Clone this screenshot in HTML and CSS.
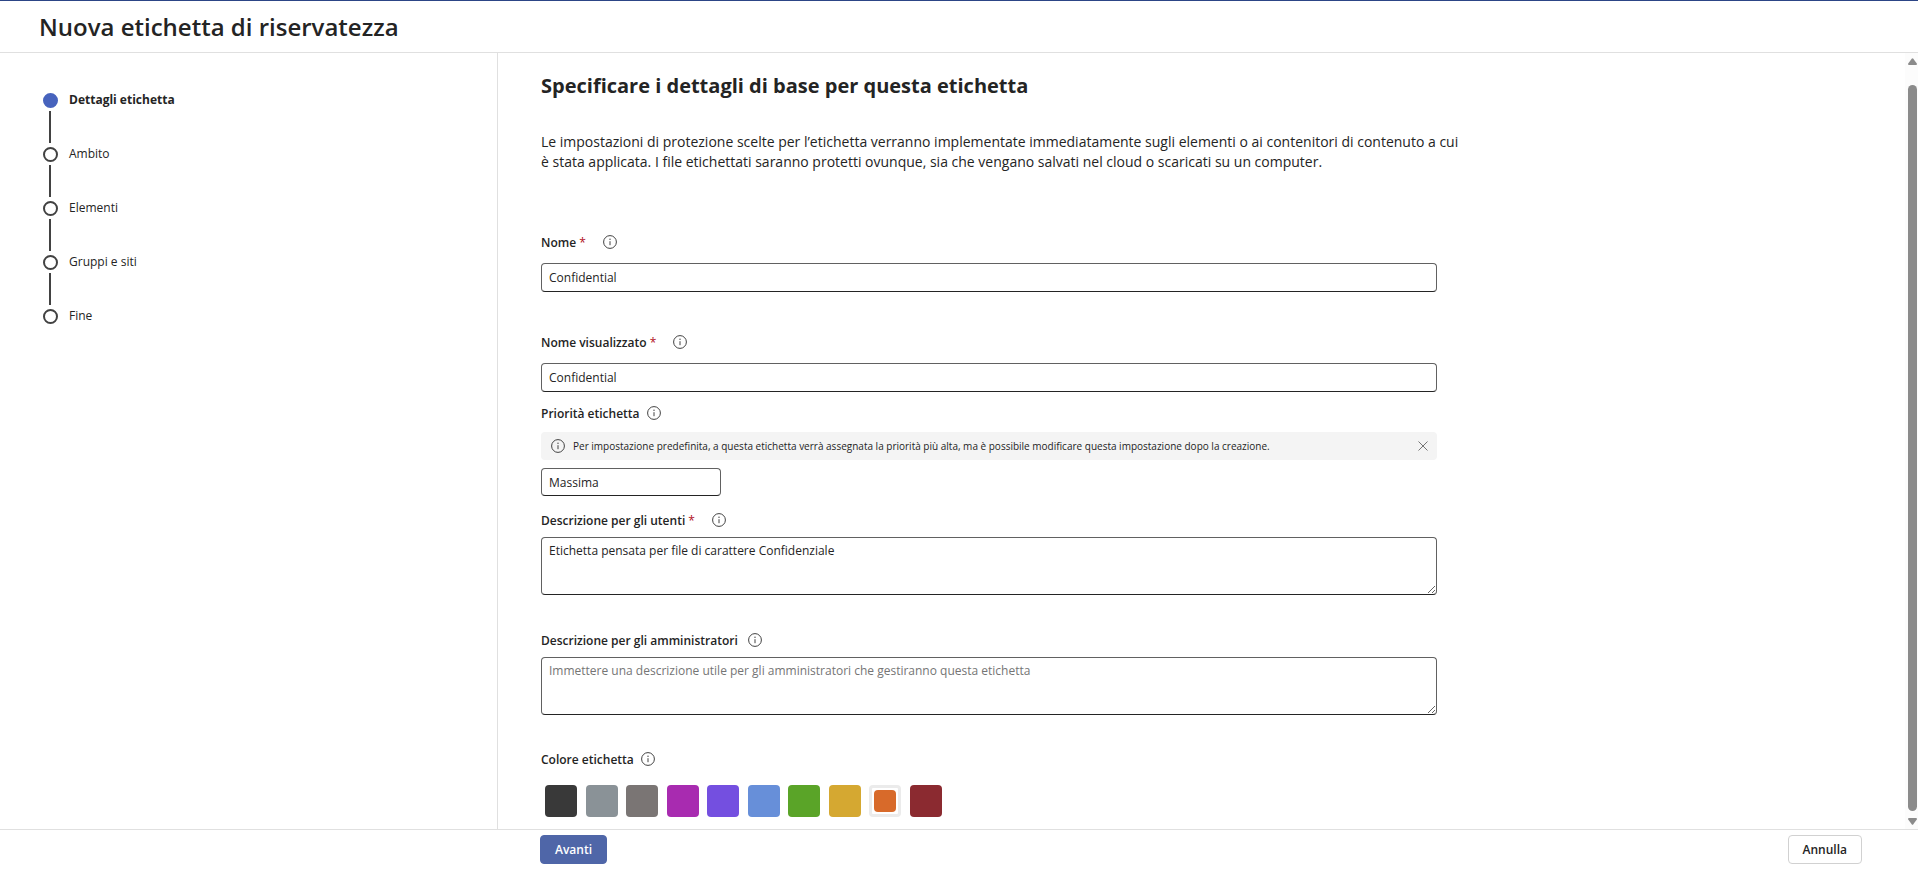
FILE: index.html
```html
<!DOCTYPE html>
<html lang="it">
<head>
<meta charset="utf-8">
<meta name="viewport" content="width=device-width, initial-scale=1">
<title>Nuova etichetta di riservatezza</title>
<link rel="stylesheet" href="styles.css">
</head>
<body>
<svg class="defs" aria-hidden="true">
  <symbol id="info" viewBox="0 0 16 16">
    <circle cx="8" cy="8" r="6.4" fill="none" stroke="currentColor" stroke-width="1"/>
    <path d="M8 7.2v4" stroke="currentColor" stroke-width="1" fill="none"/>
    <circle cx="8" cy="5.3" r=".7" fill="currentColor"/>
  </symbol>
</svg>
<div class="app">
  <header class="header"><h1 class="header-title">Nuova etichetta di riservatezza</h1></header>
  <div class="body">
    <nav class="sidebar" aria-label="Passaggi">
      <ol class="steps">
        <li class="step step-current" aria-current="step"><span class="dot"></span>Dettagli etichetta</li>
        <li class="step"><span class="dot"></span>Ambito</li>
        <li class="step"><span class="dot"></span>Elementi</li>
        <li class="step"><span class="dot"></span>Gruppi e siti</li>
        <li class="step"><span class="dot"></span>Fine</li>
      </ol>
    </nav>
    <main class="content">
      <form class="form" id="details">
        <h2 class="title">Specificare i dettagli di base per questa etichetta</h2>
        <p class="intro">Le impostazioni di protezione scelte per l’etichetta verranno implementate immediatamente sugli elementi o ai contenitori di contenuto a cui è stata applicata. I file etichettati saranno protetti ovunque, sia che vengano salvati nel cloud o scaricati su un computer.</p>

        <div class="field field-name">
          <div class="label-row required"><label for="name">Nome <span class="star">*</span></label><svg class="icon" aria-hidden="true"><use href="#info"/></svg></div>
          <input class="control" id="name" type="text" value="Confidential">
        </div>
        <div class="field field-display">
          <div class="label-row required"><label for="display">Nome visualizzato <span class="star">*</span></label><svg class="icon" aria-hidden="true"><use href="#info"/></svg></div>
          <input class="control" id="display" type="text" value="Confidential">
        </div>
        <div class="field field-priority">
          <div class="label-row"><label for="priority">Priorità etichetta</label><svg class="icon" aria-hidden="true"><use href="#info"/></svg></div>
          <div class="notice">
            <svg class="icon" aria-hidden="true"><use href="#info"/></svg>
            <span class="notice-text">Per impostazione predefinita, a questa etichetta verrà assegnata la priorità più alta, ma è possibile modificare questa impostazione dopo la creazione.</span>
            <button class="close" type="button" aria-label="Chiudi"><svg class="close-icon" viewBox="0 0 10 10" aria-hidden="true"><path d="M.5.5l9 9M9.500.5l-9 9" fill="none" stroke="currentColor"/></svg></button>
          </div>
          <input class="control control-short" id="priority" type="text" value="Massima">
        </div>
        <div class="field field-users">
          <div class="label-row required"><label for="users">Descrizione per gli utenti <span class="star">*</span></label><svg class="icon" aria-hidden="true"><use href="#info"/></svg></div>
          <textarea class="control area" id="users">Etichetta pensata per file di carattere Confidenziale</textarea>
        </div>
        <div class="field field-admins">
          <div class="label-row spaced"><label for="admins">Descrizione per gli amministratori</label><svg class="icon" aria-hidden="true"><use href="#info"/></svg></div>
          <textarea class="control area" id="admins" placeholder="Immettere una descrizione utile per gli amministratori che gestiranno questa etichetta"></textarea>
        </div>
        <div class="field field-color">
          <div class="label-row"><span id="color-label">Colore etichetta</span><svg class="icon" aria-hidden="true"><use href="#info"/></svg></div>
          <div class="swatches" role="radiogroup" aria-labelledby="color-label">
            <input class="swatch charcoal" type="radio" name="color" aria-label="Antracite">
            <input class="swatch silver" type="radio" name="color" aria-label="Argento">
            <input class="swatch gray" type="radio" name="color" aria-label="Grigio">
            <input class="swatch magenta" type="radio" name="color" aria-label="Magenta">
            <input class="swatch violet" type="radio" name="color" aria-label="Viola">
            <input class="swatch blue" type="radio" name="color" aria-label="Blu">
            <input class="swatch green" type="radio" name="color" aria-label="Verde">
            <input class="swatch yellow" type="radio" name="color" aria-label="Giallo">
            <input class="swatch orange" type="radio" name="color" aria-label="Arancione" checked>
            <input class="swatch red" type="radio" name="color" aria-label="Rosso">
          </div>
        </div>
      </form>
    </main>
    <div class="scrollbar" aria-hidden="true">
      <svg class="arrow" viewBox="0 0 9 7"><path d="M3.700.7q.8-1.100 1.600 0l3.500 4.900q.5 1.400-.8 1.400H1Q-.3 7 .2 5.600z" fill="#8b8b8b"/></svg>
      <div class="thumb"></div>
      <svg class="arrow" viewBox="0 0 9 7"><path d="M3.700 6.300q.8 1.100 1.600 0l3.500-4.900Q9.300 0 8 0H1Q-.3 0 .2 1.400z" fill="#8b8b8b"/></svg>
    </div>
  </div>
  <footer class="footer">
    <button class="button primary" type="submit" form="details">Avanti</button>
    <button class="button" type="button">Annulla</button>
  </footer>
</div>
</body>
</html>
```
FILE: styles.css
```css
* { box-sizing: border-box; }

body {
  margin: 0;
  background: #fff;
  color: #242424;
  font: 12px/20px "Open Sans", "Noto Sans", sans-serif;
}

.defs { display: none; }

.app {
  display: flex;
  flex-direction: column;
  min-height: 100vh;
  border-top: 1px solid #2c4586;
}

.header {
  display: flex;
  align-items: center;
  padding: 10px 39px 9px;
  border-bottom: 1px solid #e0e0e0;
}

.header-title {
  margin: 0;
  font-size: 24px;
  line-height: 32px;
  font-weight: 600;
}

.body { display: flex; flex: 1; }

.sidebar {
  flex: 0 0 498px;
  padding: 37px 43px;
  border-right: 1px solid #e0e0e0;
}

.steps {
  display: flex;
  flex-direction: column;
  gap: 34px;
  margin: 0;
  padding: 0;
  list-style: none;
}

.step {
  position: relative;
  display: flex;
  align-items: center;
  gap: 11px;
}

.step:not(:last-child)::after {
  content: "";
  position: absolute;
  left: 6px;
  top: 21px;
  width: 2px;
  height: 32px;
  background: #424242;
}

.dot {
  width: 15px;
  height: 15px;
  border: 2px solid #424242;
  border-radius: 50%;
}

.step-current { font-weight: 700; }
.step-current .dot { border-color: #4763bd; background: #4763bd; }

.content { flex: 1; padding: 19px 43px 12px; }
.form { max-width: 896px; }

.title {
  margin: 0;
  font-size: 20px;
  line-height: 28px;
  font-weight: 700;
}

.intro { margin: 32px -32px 59px 0; font-size: 14px; }

.label-row {
  display: flex;
  align-items: center;
  gap: 6px;
  height: 24px;
  font-weight: 600;
}

.required { gap: 16px; }
.spaced { gap: 9px; }
.star { color: #b10e1c; font-weight: 400; }

.icon { flex: none; width: 16px; height: 16px; color: #424242; }
.label-row .icon { margin-bottom: 2px; }

.control {
  display: block;
  width: 100%;
  height: 29px;
  margin: 0;
  padding: 0 7px;
  border: 1px solid #616161;
  border-bottom-color: #242424;
  border-radius: 4px;
  background: #fff;
  color: #242424;
  font: inherit;
}

.control::placeholder { color: #757575; opacity: 1; }
.control-short { width: 180px; height: 28px; }
.area { height: 58px; padding: 3px 7px; resize: vertical; }

.field { display: flex; flex-direction: column; gap: 8px; }
.field-display { margin-top: 39px; }
.field-priority { margin-top: 10px; }
.field-priority .label-row { margin-bottom: -2px; }
.field-users { gap: 4px; margin-top: 13px; }
.field-admins { gap: 4px; margin-top: 34px; }
.field-color { gap: 13px; margin-top: 33px; }

.notice {
  display: flex;
  align-items: center;
  gap: 7px;
  height: 28px;
  padding: 0 8px 0 9px;
  border-radius: 4px;
  background: #f4f4f4;
  font-size: 10px;
}

.notice-text { flex: 1; }

.close {
  display: flex;
  padding: 1px;
  border: 0;
  background: none;
  color: #757575;
}

.close-icon { width: 10px; height: 10px; }

.swatches { display: flex; justify-content: space-between; width: 401px; padding-left: 4px; }

.swatch {
  appearance: none;
  width: 32px;
  height: 32px;
  margin: 0;
  border-radius: 4px;
  background: var(--color);
}

.swatch:checked {
  padding: 2px;
  border: 3px solid #ebebeb;
  background: #fff;
}

.swatch:checked::before {
  content: "";
  display: block;
  width: 22px;
  height: 22px;
  border-radius: 4px;
  background: var(--color);
}

.charcoal { --color: #393939; }
.silver { --color: #8a9297; }
.gray { --color: #7a7574; }
.magenta { --color: #a82bb0; }
.violet { --color: #744fe0; }
.blue { --color: #678fd9; }
.green { --color: #5aa428; }
.yellow { --color: #d5a831; }
.orange { --color: #d86a2a; }
.red { --color: #8b2a30; }

.scrollbar {
  display: flex;
  flex-direction: column;
  align-items: center;
  gap: 7px;
  width: 13px;
  padding: 5px 1px 4px 2px;
  background: #fcfcfc;
}

.arrow { flex: none; width: 9px; height: 7px; }
.thumb { flex: 1; width: 9px; margin-top: 13px; border-radius: 5px; background: #8b8b8b; }

.footer {
  display: flex;
  justify-content: space-between;
  padding: 5px 56px 5px 540px;
  border-top: 1px solid #e0e0e0;
}

.button {
  height: 29px;
  padding: 0 14px;
  border: 1px solid #d1d1d1;
  border-radius: 4px;
  background: #fff;
  color: #242424;
  font: inherit;
  font-weight: 600;
}

.primary { border-color: #4f66a8; background: #4f66a8; color: #fff; }
```
